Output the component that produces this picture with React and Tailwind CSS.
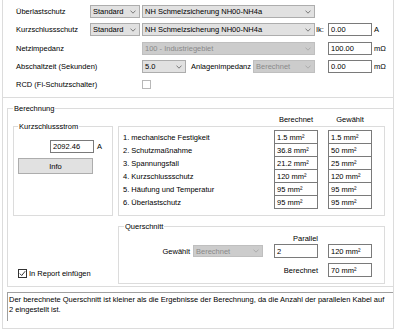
import React from "react";

const Chevron = ({ color = "#5f5f5f" }) => (
  <svg width="6" height="4" viewBox="0 0 6 4" className="shrink-0">
    <path d="M0.5 0.6 L3 3.2 L5.5 0.6" fill="none" stroke={color} strokeWidth="0.8" />
  </svg>
);

const Select = ({ className = "", disabled, children }) => (
  <div
    className={`flex items-center justify-between pl-[2px] pr-[3px] border whitespace-nowrap overflow-hidden ${
      disabled ? "bg-[#cccccc] border-[#bfbfbf] text-[#8a8a8a]" : "bg-[#e1e1e1] border-[#adadad]"
    } ${className}`}
  >
    <span>{children}</span>
    <Chevron color={disabled ? "#a3a3a3" : "#5f5f5f"} />
  </div>
);

const Input = ({ className = "", children }) => (
  <div className={`flex items-center pl-[2px] bg-white border border-[#7a7a7a] whitespace-nowrap ${className}`}>
    {children}
  </div>
);

const rows = [
  ["1. mechanische Festigkeit", "1.5 mm²", "1.5 mm²"],
  ["2. Schutzmaßnahme", "36.8 mm²", "50 mm²"],
  ["3. Spannungsfall", "21.2 mm²", "25 mm²"],
  ["4. Kurzschlussschutz", "120 mm²", "120 mm²"],
  ["5. Häufung und Temperatur", "95 mm²", "95 mm²"],
  ["6. Überlastschutz", "95 mm²", "95 mm²"],
];

export default function App() {
  return (
    <div className="w-[400px] h-[332px] bg-white overflow-hidden text-black text-[7.5px] leading-[9px] font-['Liberation_Sans',Arial,sans-serif]">
      <div className="ml-[2px] w-[392px] h-[329px] border-l border-r border-b border-[#dcdcdc]">
        {/* Schutz settings */}
        <div className="h-[98px] border-b border-[#dcdcdc] pl-[13px] pt-[5px] flex flex-col">
          <div className="flex items-center h-[13px]">
            <span className="w-[74px]">Überlastschutz</span>
            <Select className="w-[50px] h-[13px]">Standard</Select>
            <Select className="ml-[2px] w-[173px] h-[13px]">NH Schmelzsicherung NH00-NH4a</Select>
          </div>
          <div className="flex items-center h-[13px] mt-[5px]">
            <span className="w-[74px]">Kurzschlussschutz</span>
            <Select className="w-[50px] h-[13px]">Standard</Select>
            <Select className="ml-[2px] w-[173px] h-[13px]">NH Schmelzsicherung NH00-NH4a</Select>
            <span className="w-[13px] pl-[1px]">Ik:</span>
            <Input className="w-[44px] h-[13px]">0.00</Input>
            <span className="ml-[2px]">A</span>
          </div>
          <div className="flex items-center h-[13px] mt-[6px]">
            <span className="w-[126px]">Netzimpedanz</span>
            <Select disabled className="w-[173px] h-[13px]">100 - Industriegebiet</Select>
            <span className="w-[13px]" />
            <Input className="w-[44px] h-[13px]">100.00</Input>
            <span className="ml-[2px]">mΩ</span>
          </div>
          <div className="flex items-center h-[13px] mt-[5px]">
            <span className="w-[126px]">Abschaltzeit (Sekunden)</span>
            <Select className="w-[44px] h-[13px]">5.0</Select>
            <span className="w-[67px] pl-[5px] whitespace-nowrap">Anlagenimpedanz</span>
            <Select disabled className="w-[62px] h-[13px]">Berechnet</Select>
            <span className="w-[13px]" />
            <Input className="w-[44px] h-[13px]">0.00</Input>
            <span className="ml-[2px]">mΩ</span>
          </div>
          <div className="flex items-center h-[13px] mt-[5px]">
            <span className="w-[126px]">RCD (Fi-Schutzschalter)</span>
            <div className="w-[9px] h-[9px] bg-white border border-[#b8b8b8]" />
          </div>
        </div>

        {/* Berechnung */}
        <fieldset className="ml-[4px] mt-[6px] h-[183px] border-t border-l border-b border-[#dcdcdc]">
          <legend className="ml-[5px] px-[1px] leading-[9px]">Berechnung</legend>
          <div className="flex h-[172px]">
            <div className="ml-[5px] w-[100px] flex flex-col">
              <fieldset className="mt-[9px] h-[94px] border border-[#dcdcdc]">
                <legend className="ml-[4px] px-[1px] leading-[9px]">Kurzschlussstrom</legend>
                <div className="flex items-center mt-[9px] ml-[36px]">
                  <Input className="w-[44px] h-[13px]">2092.46</Input>
                  <span className="ml-[3px]">A</span>
                </div>
                <button className="mt-[5px] ml-[4px] w-[75px] h-[16px] bg-[#e1e1e1] border border-[#adadad] flex items-center justify-center">
                  Info
                </button>
              </fieldset>
              <div className="mt-auto mb-[7px] ml-[5px] flex items-center h-[9px]">
                <div className="w-[9px] h-[9px] bg-white border border-[#333333] flex items-center justify-center">
                  <svg width="7" height="7" viewBox="0 0 7 7">
                    <path d="M0.8 3.6 L2.7 5.5 L6.2 1.2" fill="none" stroke="#222222" strokeWidth="0.9" />
                  </svg>
                </div>
                <span className="ml-[2px]">In Report einfügen</span>
              </div>
            </div>

            <div className="ml-[5px] w-[267px] flex flex-col">
              <div className="mt-[2px] h-[9px] flex pl-[156px]">
                <span className="w-[44px] text-center">Berechnet</span>
                <span className="ml-[10px] w-[44px] text-center">Gewählt</span>
              </div>
              <div className="mt-[2px] h-[90px] border border-[#dcdcdc] pt-[3px]">
                {rows.map(([label, calc, sel], i) => (
                  <div key={i} className={`flex items-center h-[14px] ${i > 0 ? "-mt-[1px]" : ""}`}>
                    <span className="w-[155px] pl-[4px] whitespace-nowrap">{label}</span>
                    <Input className="w-[44px] h-[14px]">{calc}</Input>
                    <Input className="ml-[10px] w-[44px] h-[14px]">{sel}</Input>
                  </div>
                ))}
              </div>
              <fieldset className="mt-[6px] h-[62px] border border-[#dcdcdc]">
                <legend className="ml-[5px] px-[1px] leading-[9px]">Querschnitt</legend>
                <div className="mt-[3px] h-[9px] flex justify-end pr-[66px]">Parallel</div>
                <div className="mt-[1px] flex items-center justify-end pr-[12px]">
                  <span>Gewählt</span>
                  <Select disabled className="ml-[3px] w-[70px] h-[12px]">Berechnet</Select>
                  <Input className="ml-[11px] w-[44px] h-[14px]">2</Input>
                  <Input className="ml-[10px] w-[44px] h-[14px]">120 mm²</Input>
                </div>
                <div className="mt-[5px] flex items-center justify-end pr-[12px]">
                  <span>Berechnet</span>
                  <Input className="ml-[10px] w-[44px] h-[14px]">70 mm²</Input>
                </div>
              </fieldset>
            </div>
          </div>
        </fieldset>

        {/* Hinweis */}
        <div className="ml-[4px] mt-[5px] w-[386px] h-[29px] border-t border-l border-[#a0a0a0] pl-[1px] pt-[2px] leading-[9.5px] whitespace-nowrap">
          Der berechnete Querschnitt ist kleiner als die Ergebnisse der Berechnung, da die Anzahl der parallelen Kabel auf
          <br />2 eingestellt ist.
        </div>
      </div>
    </div>
  );
}
